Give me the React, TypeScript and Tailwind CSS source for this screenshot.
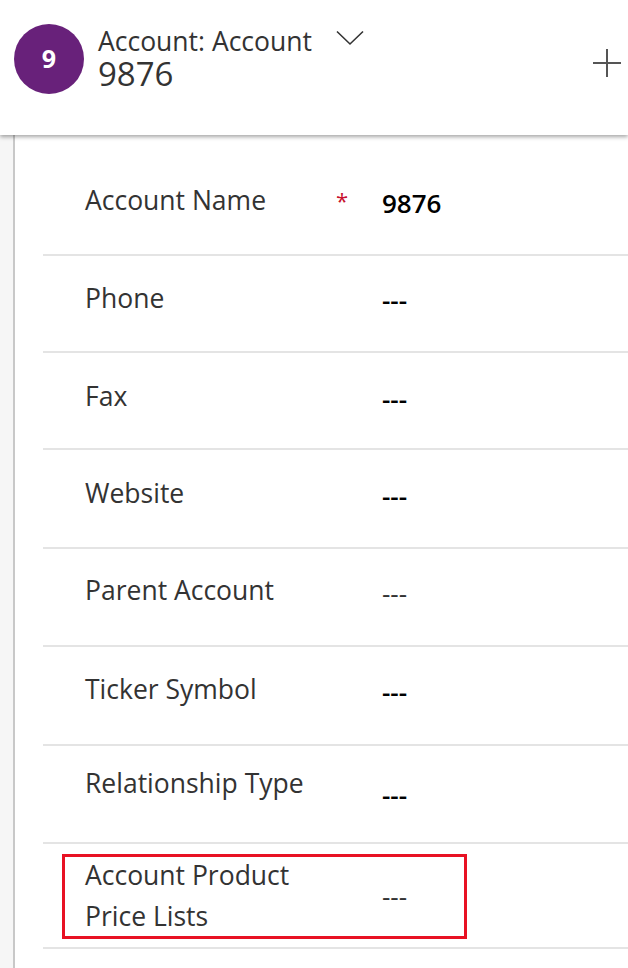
import React from "react";

type Field = {
  label: string;
  value: string;
  strong: boolean;
  required?: boolean;
  height: string;
  labelPad: string;
  valuePad?: string;
};

const FIELDS: Field[] = [
  { label: "Account Name", value: "9876", strong: true, required: true, height: "h-[98px]", labelPad: "pt-[24px]", valuePad: "pt-[27px]" },
  { label: "Phone", value: "---", strong: true, height: "h-[97px]", labelPad: "pt-[24px]", valuePad: "pt-[26px]" },
  { label: "Fax", value: "---", strong: true, height: "h-[97px]", labelPad: "pt-[25px]", valuePad: "pt-[28px]" },
  { label: "Website", value: "---", strong: true, height: "h-[99px]", labelPad: "pt-[25px]", valuePad: "pt-[28px]" },
  { label: "Parent Account", value: "---", strong: false, height: "h-[98px]", labelPad: "pt-[23px]", valuePad: "pt-[26px]" },
  { label: "Ticker Symbol", value: "---", strong: true, height: "h-[99px]", labelPad: "pt-[24px]", valuePad: "pt-[27px]" },
  { label: "Relationship Type", value: "---", strong: true, height: "h-[98px]", labelPad: "pt-[19px]", valuePad: "pt-[31px]" },
];

const font = "font-['Open_Sans',sans-serif]";

function FieldRow({ f }: { f: Field }) {
  return (
    <div className={`flex border-b-2 border-[#e4e4e4] pl-[42px] ${f.height}`}>
      <div className={`w-[251px] text-[26.5px] leading-[36px] text-[#333] ${f.labelPad}`}>{f.label}</div>
      <div className={`w-[46px] text-[22px] leading-[36px] text-[#c8102e] ${f.labelPad}`}>{f.required ? "*" : ""}</div>
      <div
        className={`text-[26px] leading-[36px] ${f.valuePad} ${
          f.strong ? "font-semibold text-black" : "text-[#333]"
        }`}
      >
        {f.value}
      </div>
    </div>
  );
}

export default function App() {
  return (
    <div className={`w-[628px] h-[968px] overflow-hidden bg-white ${font}`}>
      {/* header */}
      <div className="relative z-10 flex h-[135px] bg-white shadow-[0_2px_4px_rgba(0,0,0,0.35)]">
        <div className="ml-[14px] mt-[24px] flex h-[70px] w-[70px] items-center justify-center rounded-full bg-[#68217a] text-[25px] font-bold text-white">
          9
        </div>
        <div className="ml-[14px] mt-[25px] flex flex-col">
          <div className="flex items-start">
            <span className="text-[26.5px] leading-[32px] text-[#333]">Account: Account</span>
            <svg className="ml-[24px] mt-[5px]" width="28" height="16" viewBox="0 0 28 16" fill="none">
              <path d="M1 1.5 L14 14 L27 1.5" stroke="#333" strokeWidth="1.6" />
            </svg>
          </div>
          <span className="text-[33px] leading-[34px] text-[#333]">9876</span>
        </div>
        <div className="ml-auto mr-[6px] mt-[48px]">
          <svg width="30" height="30" viewBox="0 0 30 30" fill="none">
            <path d="M15 1 V29 M1 15 H29" stroke="#555" strokeWidth="2" />
          </svg>
        </div>
      </div>

      {/* body */}
      <div className="flex h-[833px]">
        <div className="w-[15px] shrink-0 border-r-2 border-[#c8c8c8] bg-[#f6f6f6]" />
        <div className="flex-1 pl-[28px] pt-[23px]">
          {FIELDS.map((f) => (
            <FieldRow key={f.label} f={f} />
          ))}
          <div className="h-[105px] border-b-2 border-[#e4e4e4] pl-[19px] pt-[10px]">
            <div className="flex h-[85px] w-[405px] border-[3px] border-[#e81123] pl-[20px]">
              <div className="-mt-[2px] w-[297px] text-[26.5px] leading-[41px] text-[#333]">
                Account Product
                <br />
                Price Lists
              </div>
              <div className="pt-[21px] text-[26px] leading-[36px] text-[#333]">---</div>
            </div>
          </div>
        </div>
      </div>
    </div>
  );
}
